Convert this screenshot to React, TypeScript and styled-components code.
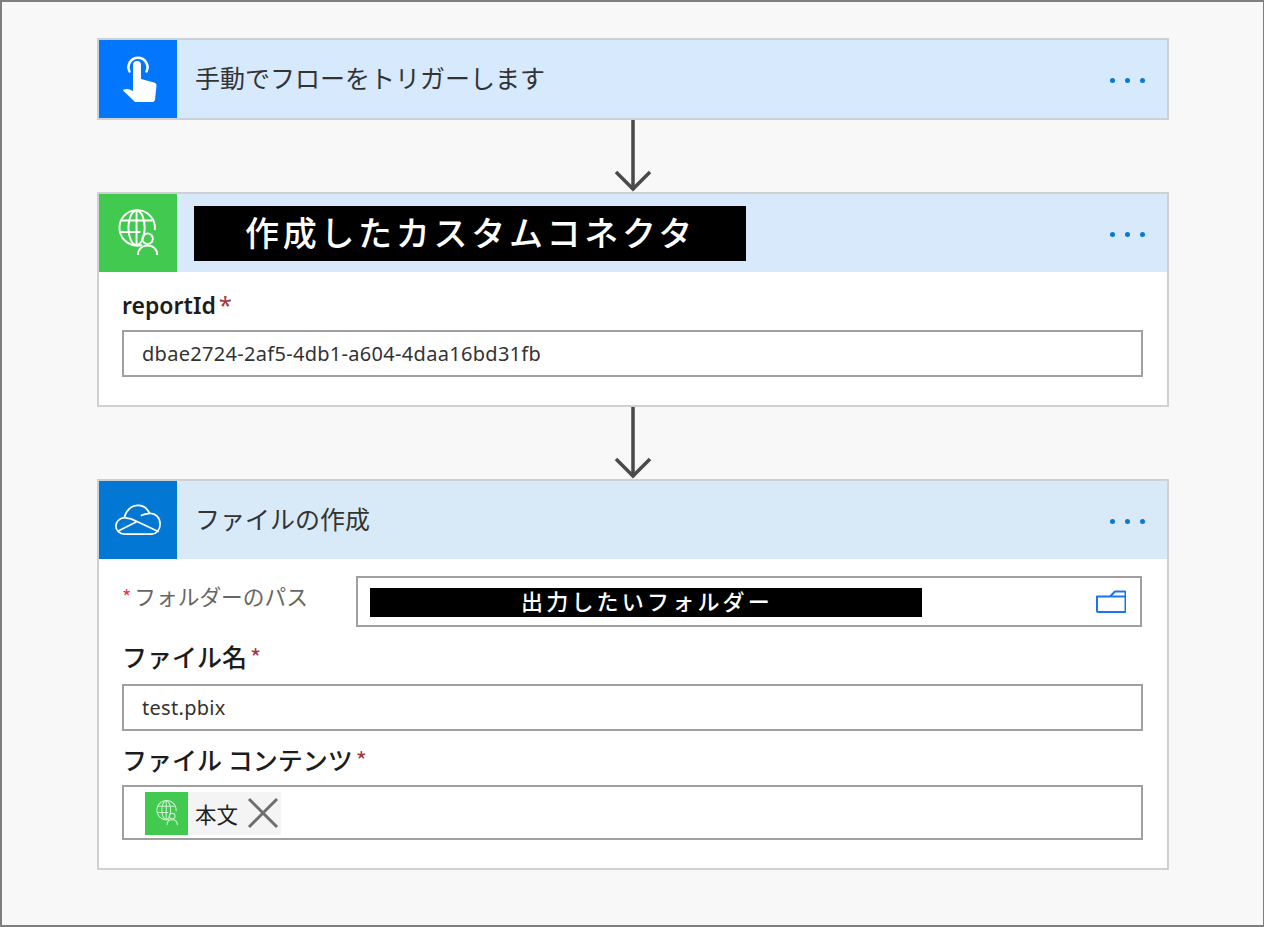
import React, { FC } from 'react'
import styled, { createGlobalStyle } from 'styled-components'

const cjk = `"Noto Sans CJK JP", "Noto Sans", sans-serif`
const latin = `"Noto Sans", "Noto Sans CJK JP", sans-serif`

const GlobalStyle = createGlobalStyle`
  html, body {
    margin: 0;
    padding: 0;
    background: #f8f8f8;
  }
  * {
    box-sizing: border-box;
  }
`
const Frame = styled.div`
  width: 1264px;
  height: 927px;
  padding: 36px 94px 0 95px;
  background: #f8f8f8;
  border: 2px solid #7f7f7f;
  border-right-width: 1px;
  overflow: hidden;
  font-family: ${cjk};
`
const Card = styled.section`
  width: 1072px;
  background: #fff;
  border: 2px solid #cdd1d4;
`
const CardHeader = styled.header<{ $tint: string }>`
  display: flex;
  align-items: center;
  height: 78px;
  padding-right: 20px;
  background: ${props => props.$tint};
`
const IconTile = styled.div<{ $color: string }>`
  display: flex;
  flex: none;
  align-items: center;
  justify-content: center;
  width: 78px;
  height: 78px;
  background: ${props => props.$color};
`
const Title = styled.h2`
  flex: 1;
  margin: 0 0 5px 18px;
  color: #333;
  font-size: 25px;
  font-weight: 400;
  line-height: 34px;
`
const BlackBanner = styled.div`
  flex: none;
  width: 552px;
  height: 55px;
  margin-left: 17px;
  padding-left: 51px;
  background: #000;
  color: #fff;
  font-size: 34px;
  font-weight: 500;
  letter-spacing: 3.7px;
  line-height: 52px;
`
const HeaderSpacer = styled.div`
  flex: 1;
`
const Dots = styled.div`
  display: flex;
  flex: none;
  gap: 10px;
  margin: 3px 2px 0 0;
`
const Dot = styled.span`
  width: 5px;
  height: 5px;
  border-radius: 50%;
  background: #0a78d7;
`
const Connector = styled.div`
  display: flex;
  justify-content: center;
  width: 1072px;
  height: 72px;
`
const Body = styled.div`
  padding: 16px 24px 28px 23px;
`
const BoldLabel = styled.div<{ $latin?: boolean; $height: number }>`
  height: ${props => props.$height}px;
  color: #1c1c1c;
  font-family: ${props => (props.$latin ? latin : cjk)};
  font-size: ${props => (props.$latin ? 23 : 25)}px;
  font-weight: ${props => (props.$latin ? 600 : 500)};
  line-height: ${props => (props.$latin ? 34 : 36)}px;
`
const Star = styled.span`
  margin-left: 3px;
  color: #a4353f;
  font-size: 24px;
  font-weight: 400;
  line-height: 1;
`
const TextBox = styled.div<{ $height: number }>`
  display: flex;
  align-items: center;
  height: ${props => props.$height}px;
  padding-left: 18px;
  background: #fff;
  border: 2px solid #a0a0a0;
  color: #333;
  font-family: ${latin};
  font-size: 20px;
  letter-spacing: 0.3px;
`
const PathRow = styled.div`
  display: flex;
  margin: 1px 1px 11px 0;
`
const PathLabel = styled.div`
  width: 234px;
  color: #666;
  font-size: 21.7px;
  line-height: 40px;
`
const RedStar = styled.span`
  margin-right: 3px;
  color: #e8384f;
  font-size: 20px;
`
const PathBox = styled.div`
  display: flex;
  flex: 1;
  align-items: center;
  justify-content: space-between;
  height: 51px;
  padding: 0 14px 0 12px;
  border: 2px solid #a0a0a0;
`
const PathBanner = styled.div`
  width: 552px;
  height: 29px;
  margin-top: 2px;
  padding-left: 151px;
  background: #000;
  color: #fff;
  font-size: 22px;
  font-weight: 500;
  letter-spacing: 3.2px;
  line-height: 25px;
`
const Gap = styled.div<{ $size: number }>`
  height: ${props => props.$size}px;
`
const Token = styled.div`
  display: flex;
  align-items: center;
  height: 43px;
  margin: 1px 0 0 3px;
  background: #f4f4f4;
  color: #222;
  font-family: ${cjk};
  font-size: 21.500px;
  letter-spacing: 0;
`
const TokenIcon = styled.div`
  display: flex;
  align-items: center;
  justify-content: center;
  width: 43px;
  height: 43px;
  margin-right: 7px;
  background: #42c94f;
`
const TokenClose = styled.svg`
  margin: 0 2px 0 9px;
`
const TouchSvg = styled.svg`
  margin-left: 3px;
`

const TouchIcon: FC = () => (
  <TouchSvg width="36" height="48" viewBox="0 0 36 48" fill="none">
    <path d="M7.500 16.500a9.500 9.500 0 1 1 17 0" stroke="#fff" strokeWidth="2.500" strokeLinecap="round" />
    <path
      fill="#fff"
      d="M11 10a4 4 0 0 1 8 0v14l13 3.500c1.500.4 2.500 1.500 2.500 3l-1.500 14c-.2 1.500-1 2.500-2.500 2.500H14c-1 0-1.500-.3-2-1L1.500 36c-.6-.6-.5-1.200.2-1.500 3-1.200 6-.6 9.300 1.500z"
    />
  </TouchSvg>
)

const GlobeUserIcon: FC<{ size: number; opacity?: number }> = ({ size, opacity = 1 }) => (
  <svg width={size} height={size} viewBox="0 0 44 50" fill="none" stroke="#fff" strokeWidth="2" opacity={opacity}>
    <path d="M26 37.500A18.500 18.500 0 1 1 39.500 22" />
    <ellipse cx="20.500" cy="19.500" rx="8.500" ry="18" />
    <path d="M20.500 1.500v36M4 12h33M2.500 24h22" />
    <circle cx="32" cy="31" r="5.500" />
    <path d="M22 48c0-6 4-10 10-10s10 4 10 10" />
  </svg>
)

const CloudIcon: FC = () => (
  <svg width="48" height="32" viewBox="0 0 50 34" fill="none" stroke="#fff" strokeWidth="1.800" strokeLinejoin="round">
    <path d="M11 32C5 32 1.500 28 1.500 23.500S5 15 10.500 14.500C12 7 18 1.500 25 1.500c6.500 0 10 3.500 12.500 8.500 6-.5 11 4.500 11 11.500 0 6-4 10.500-9 10.500z" />
    <path d="M3.500 29L24 18.500 47 29.500M10.500 14.500c5 .5 9 1.500 13.500 4M37.500 10c-3.500.5-7 1-9.500 2.500" />
  </svg>
)

const FolderIcon: FC = () => (
  <svg width="30" height="23" viewBox="0 0 30 23" fill="none" stroke="#1a73f0" strokeWidth="2" strokeLinejoin="round">
    <path d="M1 6.500h13l5-5h9.500a1 1 0 0 1 1 1V21a1 1 0 0 1-1 1H2a1 1 0 0 1-1-1z" />
    <path d="M15 6.500h14" />
  </svg>
)

const DownArrow: FC = () => (
  <svg width="38" height="72" viewBox="0 0 38 72" fill="none" stroke="#4a4a4a" strokeWidth="3.500">
    <path d="M19 0v70" />
    <path d="M2 52l17 17 17-17" />
  </svg>
)

const MoreDots: FC = () => (
  <Dots>
    <Dot />
    <Dot />
    <Dot />
  </Dots>
)

const Arrow: FC = () => (
  <Connector>
    <DownArrow />
  </Connector>
)

export default function App() {
  return (
    <Frame>
      <GlobalStyle />
      <Card>
        <CardHeader $tint="#d7e9fd">
          <IconTile $color="#0277fe">
            <TouchIcon />
          </IconTile>
          <Title>手動でフローをトリガーします</Title>
          <MoreDots />
        </CardHeader>
      </Card>
      <Arrow />
      <Card>
        <CardHeader $tint="#d7e9fb">
          <IconTile $color="#42c94f">
            <GlobeUserIcon size={48} />
          </IconTile>
          <BlackBanner>作成したカスタムコネクタ</BlackBanner>
          <HeaderSpacer />
          <MoreDots />
        </CardHeader>
        <Body>
          <BoldLabel $latin $height={42}>
            reportId<Star>*</Star>
          </BoldLabel>
          <TextBox $height={47}>dbae2724-2af5-4db1-a604-4daa16bd31fb</TextBox>
        </Body>
      </Card>
      <Arrow />
      <Card>
        <CardHeader $tint="#d8e9f8">
          <IconTile $color="#0278d4">
            <CloudIcon />
          </IconTile>
          <Title>ファイルの作成</Title>
          <MoreDots />
        </CardHeader>
        <Body>
          <PathRow>
            <PathLabel>
              <RedStar>*</RedStar>フォルダーのパス
            </PathLabel>
            <PathBox>
              <PathBanner>出力したいフォルダー</PathBanner>
              <FolderIcon />
            </PathBox>
          </PathRow>
          <BoldLabel $height={46}>
            ファイル名<Star>*</Star>
          </BoldLabel>
          <TextBox $height={47}>test.pbix</TextBox>
          <Gap $size={10} />
          <BoldLabel $height={44}>
            ファイル コンテンツ<Star>*</Star>
          </BoldLabel>
          <TextBox $height={55}>
            <Token>
              <TokenIcon>
                <GlobeUserIcon size={26} opacity={0.75} />
              </TokenIcon>
              本文
              <TokenClose width="32" height="32" viewBox="0 0 32 32" fill="none" stroke="#6e6e6e" strokeWidth="3">
                <path d="M2 2l28 28M30 2L2 30" />
              </TokenClose>
            </Token>
          </TextBox>
        </Body>
      </Card>
    </Frame>
  )
}
